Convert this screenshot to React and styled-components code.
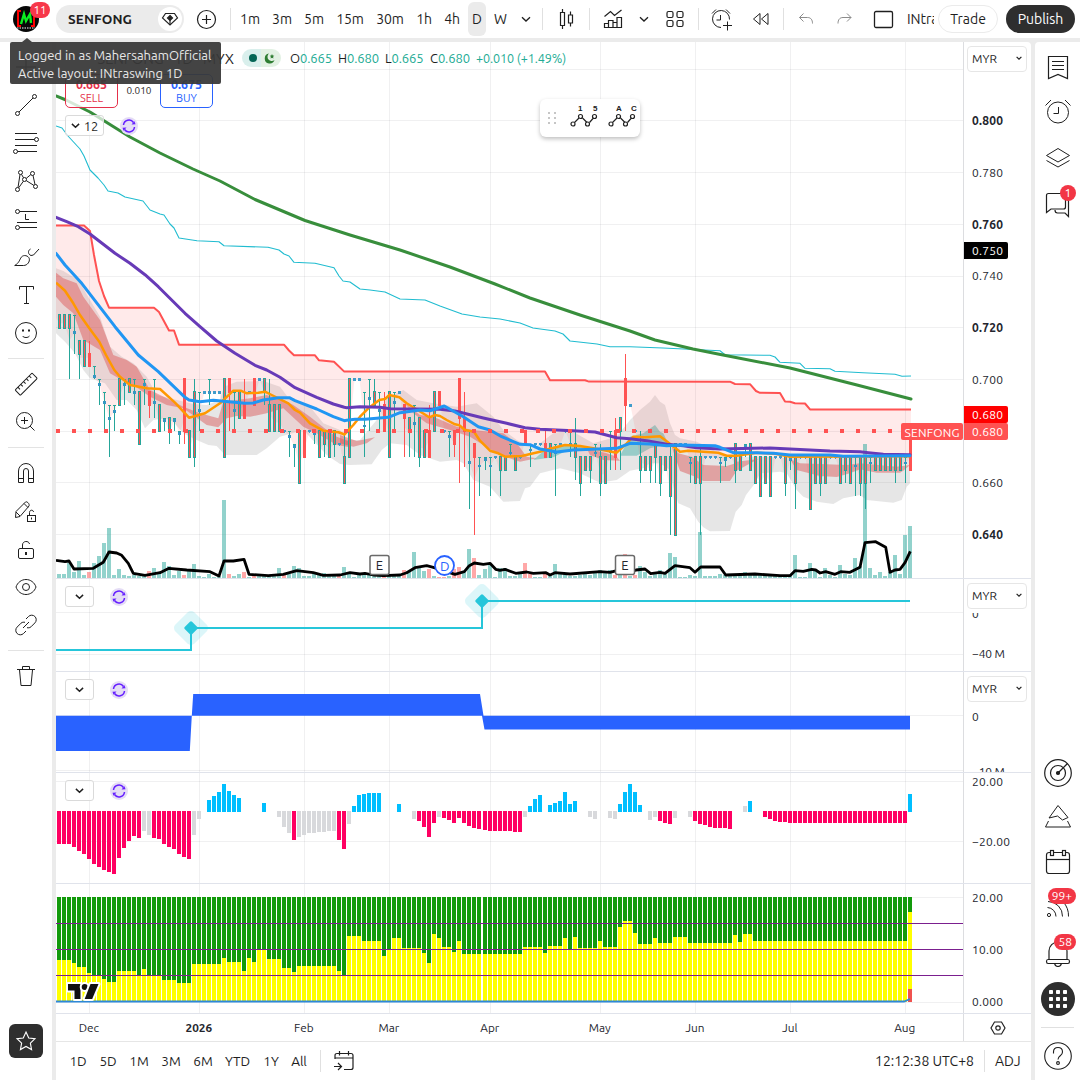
import { Fragment } from 'react';
import styled, { createGlobalStyle } from 'styled-components';

const FONT = `Ubuntu, 'Noto Sans', 'Open Sans', sans-serif`;

const MONTHS = [
  { x: 89, label: 'Dec' },
  { x: 199, label: '2026', bold: true },
  { x: 304, label: 'Feb' },
  { x: 389, label: 'Mar' },
  { x: 490, label: 'Apr' },
  { x: 600, label: 'May' },
  { x: 695, label: 'Jun' },
  { x: 790, label: 'Jul' },
  { x: 905, label: 'Aug' },
];

const priceY = (p) => 120.7 + (800 - p) * 2.587;
const barX = (i) => 57 + 5 * i + (i >= 85 ? 1 : 0);

// series are stored in thirds of a pixel, relative to the start of a segment
const seg = (x0, y0, text) =>
  text
    .trim()
    .split(' ')
    .map((pair) => {
      const [x, y] = pair.split(',').map(Number);
      return `${(x0 + x / 3).toFixed(1)},${(y0 + y / 3).toFixed(1)}`;
    })
    .join(' ');
const A = (t) => seg(50, 200, t);
const V = (t) => seg(50, 480, t);
const B = (t) => seg(340, 340, t);
const C = (t) => seg(630, 340, t);

const GREEN =
  '56,96 66,100 90,112 130,137 160,153 193,169 220,181 255,199.5 280,210 305,220.500 350,235 400,250 450,267 495,284 530,298 580,315 630,331 655,340 693,349 723,355 790,368 857,385 911,399';
const CYAN =
  '56,126 62,128 68,136 80,149 84,156 90,170 98,178 104,185 108,191 118,193 125,197 143,201 150,210 160,214 164,215 170,224 174,228 179,238 197,240.7 219,241.7 224,245.7 268,247.3 279,250 284,254 289,256 294,262.3 315,263.3 334,267.7 339,276 343,281 350,282 360,289 370,290 385,292 400,299 425,300 440,306 462,314 480,317 500,319 520,323 533,328 555,331 563,334 570,341 597,344 610,346.7 630,346.7 663,348 720,350.7 725,354.7 770,355.3 775,357 780,362.3 800,363.3 805,368.3 830,368.7 835,371.3 863,372.7 895,374.3 902,376.3 911,376';
const RED =
  '56,225.5 84,225.5 90,231 94,255 99,281 104,296 109,307.7 154,307.7 159,312 169,330.5 174,330.5 179,344.7 284,344.7 289,350.5 294,355.2 315,355.3 319,360.3 334,361.7 344,371.4 545,371.4 550,380.2 585,380.3 589,381.6 730,381.7 735,384 750,384.2 756,391 760,392.8 780,393 785,401.5 790,401.7 795,403.3 805,403.5 810,409.4 911,409.4';

const PURPLE = [
  A('18,52 50,65 85,80 120,102 195,160 240,190 285,224 325,260 405,340 450,380 500,423 555,460 615,496 650,510 690,532 735,563 800,592 850,612 883,622'),
  B('20,203 60,200 120,202 150,206 300,208 345,213 430,234 500,250 555,263 600,268 700,272 765,276 830,293'),
  C('0,296 50,302 110,313 160,317 200,323 270,327 420,324 600,333 690,335 715,338 760,343 840,344'),
].join(' ');
const BLUE = [
  A('18,160 45,195 95,250 195,380 265,465 325,515 405,592 417,600 450,605 490,601 585,610 610,609 640,600 685,593 718,593 735,602 800,627 850,650 883,662'),
  B('20,241 45,238 75,238 145,232 180,218 240,210 270,212 313,198 370,230 415,260 450,270 485,290 540,313 570,314 600,327 650,336 700,330 830,325'),
  C('0,310 60,312 110,317 150,315 255,317 270,322 310,338 380,338 430,340 480,345 600,345 640,349 840,347'),
].join(' ');
const ORANGE = [
  A('18,248 45,272 70,310 90,345 118,385 148,425 168,465 193,510 210,530 240,555 290,565 330,567 375,608 417,653 465,640 510,610 550,572 572,572 590,580 625,578 645,575 665,585 715,610 735,630 750,638 780,670 820,692 865,697 883,703'),
  B('13,284 40,255 60,230 85,205 118,180 135,177 148,165 178,172 200,190 268,232 285,225 300,228 320,240 345,253 358,256 375,270 402,275 420,302 450,332 475,340 495,350 545,348 600,335 635,325 675,315 720,318 760,325 800,332 830,338 860,310'),
  C('10,290 45,292 90,289 105,300 150,335 175,332 265,338 290,347 320,347 380,338 440,342 480,350 840,349'),
].join(' ');
const VOLUME_MA = [
  V('18,241 45,245 57,243 72,267 130,265 160,247 177,216 200,219 215,226 235,250 250,280 285,286 330,278 357,265 410,270 480,275 507,288 522,243 550,243 582,238 597,283 655,287 700,283 740,272 790,278 820,286 870,285'),
  B('0,705 30,698 60,702 75,700 100,705 130,707 180,705 200,698 225,683 260,677 280,682 345,703 373,695 388,677 403,669 430,673 450,670 467,688 480,691 495,688 527,700 560,696 580,700 618,698 630,705 645,698 690,702 780,695 810,697 830,692 865,700'),
  C('18,690 45,687 62,701 90,697 105,700 135,677 180,683 195,697 212,681 270,681 287,705 375,702 450,707 480,707 495,692 520,694 545,688 557,690 570,699 587,695 615,703 632,695 660,697 690,682 705,608 737,605 767,622 780,697 795,690 810,688 825,668 841,634'),
].join(' ');

const GREY_BAND = [
  A('18,205 40,213 85,240 120,300 150,350 180,440 215,470 250,490 290,530 320,585 380,600 430,612 470,615 510,600 522,560 560,545 640,543 690,560 720,600 780,620 820,670 870,690'),
  B('20,300 60,300 110,240 140,175 190,150 230,180 280,190 350,200 410,190 460,230 490,270 530,300 580,325 640,280 690,270 760,310 830,290'),
  C('0,240 30,210 60,185 75,165 90,185 105,195 120,250 135,285 150,295 200,305 250,330 290,350 400,350 480,355 600,350 840,350'),
  C('840,430 830,440 815,480 790,488 710,480 690,465 640,475 610,492 560,485 520,470 500,450 470,400 450,395 390,400 375,430 348,465 335,495 317,515 300,573 240,574 220,562 205,545 180,505 145,490 130,440 120,390 90,370 60,370 40,385 0,392'),
  B('830,420 780,428 720,400 660,385 600,400 570,440 555,445 540,483 490,485 450,440 400,420 370,370 350,360 300,365 240,345 200,315 150,310 125,330 95,373 30,375 0,372'),
  A('860,785 830,765 760,690 690,710 650,745 620,765 525,765 500,738 475,735 440,720 400,700 370,665 345,655 310,660 285,685 260,630 230,600 200,600 165,550 120,535 100,510 75,460 45,425 18,400'),
].join(' ');

const RED_ZONES = [
  A('18,218 40,235 80,250 100,290 150,360 190,465 230,480 260,500 300,570 350,595 400,620 450,640 505,655 520,605 600,595 650,585 700,600 730,615 780,650 830,690 860,710 900,725 900,742 860,735 800,700 760,680 700,625 650,640 600,650 560,648 530,655 505,682 470,675 400,625 350,615 300,590 250,555 215,540 180,520 150,450 100,420 70,340 40,315 18,290'),
  B('0,285 50,303 105,292 80,310 40,320 0,310'),
  B('190,185 240,225 280,230 350,260 400,270 490,280 530,310 560,350 590,355 540,365 480,345 430,315 390,290 330,270 260,250 220,220'),
  B('740,325 800,340 830,350 840,362 790,360 750,345'),
  C('125,320 145,340 185,350 220,375 290,378 310,372 320,365 385,357 320,392 300,423 220,423 190,408 150,393'),
  C('480,358 510,370 570,372 650,375 690,370 800,380 840,375 820,392 810,398 740,398 690,388 660,400 620,411 570,408 500,390'),
];
const TEAL_ZONES = [
  B('580,360 620,325 680,312 740,320 740,328 680,332 640,352'),
  C('-30,347 0,290 40,280 75,255 90,275 100,280 115,312 60,325 20,347'),
];

// m: bar with a body (high low top bottom), r: falling bar, w: thin bar (high low avg), d: single trade
const CANDLES = `m 725 720 725 720|m 725 720 725 720|m 725 700 725 720|w 725 710 718|m 715 700 715 710|m 715 705 715 705|r 715 705 710 705|w 705 700 701|w 700 690 698|w 695 680 691
w 690 670 685|w 690 680 687.5|m 700 690 700 690|w 700 690 698|m 700 695 700 695|w 700 690 695|m 695 675 695 675|w 700 690 698|r 695 685 695 690|w 700 685 691
m 690 680 690 680|w 685 680 684|m 685 675 685 680|w 685 680 684|w 680 675 679|r 700 675 700 680|m 680 670 680 670|m 700 666 695 670|w 695 680 688|d 695
w 700 690 695|d 695|d 695|m 700 670 700 670|r 700 680 700 695|w 695 680 688|m 695 685 695 685|r 700 685 690 685|d 695|r 700 690 700 690
d 700|m 700 690 700 695|m 700 680 690 680|m 690 680 690 680|m 690 680 690 680|d 680|w 680 670 678|w 675 666 674|m 680 660 680 660|r 680 670 680 670
d 680|w 680 675 679|m 680 670 680 670|m 680 670 680 675|m 680 670 680 670|m 680 670 680 675|d 675|m 680 660 670 660|m 700 670 700 670|d 700
d 700|w 695 670 682|w 700 680 692.5|m 700 690 695 690|w 695 680 688|r 695 680 690 680|m 695 670 695 670|w 695 680 691|d 695|r 690 670 690 685
m 685 670 685 680|w 690 670 683|m 685 666 685 670|m 680 670 680 670|r 690 670 680 670|m 695 680 695 680|r 695 690 695 690|d 680|w 680 670 678|r 680 670 680 675
r 700 660 700 685|r 695 666 685 680|w 680 650 668|r 675 640 675 670|w 670 655 666.5|w 670 665 669|w 670 655 666.5|d 670|m 670 655 670 665|m 670 665 670 665
w 675 670 671.5|m 670 665 670 665|d 670|r 680 675 680 675|w 675 666 672.7|d 675|d 675|r 680 670 675 670|m 675 670 675 670|w 675 655 671.5
d 675|d 680|w 680 670 675|m 685 661 675 670|m 670 655 670 660|m 670 665 670 665|m 670 660 670 665|w 675 670 671.5|m 675 655 670 660|m 670 660 670 660
w 680 665 672|r 685 665 680 670|m 685 665 685 680|r 710 680 700 690|d 690|d 680|m 680 660 670 665|m 670 665 670 665|m 670 660 670 665|m 675 660 675 670
m 670 655 670 660|m 670 665 670 665|m 675 640 670 655|m 675 640 675 640|d 675|d 675|w 670 660 667.7|m 670 660 670 660|m 675 640 670 660|d 670
d 670|d 670|w 670 660 667.7|w 670 666 669|d 670|m 675 660 675 665|m 670 665 670 665|w 675 670 674|m 675 665 675 665|m 670 660 670 660
m 670 655 670 655|m 670 660 670 660|m 670 655 670 655|d 670|d 670|m 670 655 670 660|w 670 665 669|m 670 650 670 660|d 670|d 670
m 670 650 670 650|m 670 660 670 660|m 670 655 670 660|m 670 660 670 660|d 670|d 670|m 670 660 670 660|m 670 660 670 665|m 670 660 670 660|w 670 655 666.5
m 670 655 670 660|m 670 650 670 660|w 670 660 667.7|m 670 665 670 665|m 670 665 670 665|m 670 665 670 665|m 670 665 670 665|m 670 660 670 665|m 670 665 670 665|w 670 660 667.7
r 680 665 680 665`
  .split(/[|\n]/)
  .map((row) => {
    const [kind, ...v] = row.split(' ');
    const n = v.map(Number);
    const avg = kind === 'd' ? n[0] : kind === 'w' ? n[2] : (n[0] + n[1] + n[3]) / 3;
    return { kind, n, avg };
  });

const VOLUME =
  '4 4 15 6 17 3 r6 15 22 35 50 3 9 3 2 3 2 3 r7 10 5 16 12 3 7 r3 7 14 2 1 4 1 2 78 r4 2 4 r6 1 r3 2 3 2 2 10 r3 4 12 10 2 2 6 4 5 2 2 r2 11 4 1 3 5 5 3 4 r3 3 3 3 r8 6 26 10 7 r9 2 r1 r1 2 r9 r11 7 29 r20 3 9 13 1 10 10 2 2 4 r15 r4 1 1 r5 3 14 5 5 2 2 3 5 3 6 8 7 8 r3 5 r24 2 r3 12 6 2 4 8 4 25 21 1 1 3 2 46 2 2 2 4 3 2 4 4 6 4 5 3 3 2 2 2 1 2 23 1 1 15 8 1 10 3 1 13 4 3 20 12 134 10 3 6 2 6 23 4 43 52'.split(' ');

// p: pink down, g: grey down, b: blue up, G: grey up
const MOMENTUM =
  'p33 p33 p33 p36 p40 p43 p48 p53 p56 p59 p61 p63 p47 p37 p30 p25 p27 g20 g24 p27 p28 p33 p36 p38 p43 p46 p48 g24 g8 - b12 b16 b20 b28 b21 b17 b14 - - - - b9 - - g6 g16 g22 p29 g26 g24 g22 g22 g21 g21 g20 g20 p29 p38 g13 b6 b17 b18 b19 b19 b19 - - - b8 - - g8 p10 p16 p26 p12 g6 p7 p9 p12 p7 p12 p15 p17 p18 p19 p20 p20 p20 p20 p20 p21 p21 g6 b6 b13 b17 - b7 b9 b11 b20 b8 b11 - - g6 g8 - - g7 g8 b8 b20 b28 b20 b7 - g9 g6 p10 p12 p13 g7 - - g6 p10 p13 p14 p16 p17 p17 p17 p18 - - G6 b11 - - p6 p8 p10 p11 p11'
    .split(' ')
    .concat(Array(24).fill('p12'), 'b18');
const MOMENTUM_COLOR = { p: '#ff0062', g: '#d8d9dc', b: '#00bfff', G: '#d8d9dc' };

// run lengths of the stacked histogram: [bars, height of the green part]
const STACK = [
  [3, 63], [1, 66], [2, 70], [1, 76], [2, 78.7], [1, 82], [2, 85], [4, 74], [1, 78.3], [1, 72], [3, 78.7], [3, 83],
  [3, 86], [6, 67], [1, 61], [3, 65], [1, 74], [1, 61], [1, 65], [2, 53], [3, 62], [2, 71], [1, 75], [8, 69], [1, 74],
  [1, 78.3], [3, 39], [4, 44], [1, 59], [1, 53], [2, 41], [4, 51], [1, 56], [1, 66], [1, 37], [1, 41], [2, 50],
  [1, 55], [1, 44], [12, 57], [4, 50], [1, 56], [3, 49], [1, 41], [1, 53], [1, 40], [4, 51], [1, 44], [3, 50],
  [1, 30], [2, 24], [1, 36], [3, 47], [1, 41], [3, 46], [3, 40], [9, 46], [1, 38], [1, 45], [2, 37], [31, 44], [1, 15],
].flatMap(([count, h]) => Array(count).fill(h));

function Icon({ size = 28, width = 1, children, ...rest }) {
  return (
    <svg width={size} height={size} viewBox='0 0 28 28' fill='none' stroke='currentColor' strokeWidth={width} {...rest}>
      {children}
    </svg>
  );
}

function Chevron({ size = 10, width = 1.3 }) {
  return (
    <svg width={size} height={size} viewBox='0 0 10 10' fill='none' stroke='currentColor' strokeWidth={width}>
      <path d='M1 3.2 5 7l4-3.8' />
    </svg>
  );
}

const drawTools = [
  [
    <Icon><path d='M14 4v20M4 14h20' /></Icon>,
    <Icon><path d='m7 21 14-14' /><circle cx='5.5' cy='22.5' r='2' /><circle cx='22.5' cy='5.5' r='2' /></Icon>,
    <Icon>
      <path d='M3 4.5h22M3 10.5h19.5M3 16.5h22M5.5 22.5H25' />
      <circle cx='24.5' cy='10.5' r='2' /><circle cx='3.5' cy='22.5' r='2' />
    </Icon>,
    <Icon>
      <path d='M8 7.5 6 20.5M6.7 20.8l4.7-6.6M9.5 7.3l2 3.5M14.2 11.4l4.6-3.8M21 8.5l2 9M14.2 13.6l7.7 4.8' />
      <circle cx='8.5' cy='5.5' r='2' /><circle cx='20.5' cy='6.5' r='2' /><circle cx='12.5' cy='12.5' r='2' />
      <circle cx='5.5' cy='22.5' r='2' /><circle cx='23.5' cy='19.5' r='2' />
    </Icon>,
    <Icon>
      <path d='M7.5 6.5H25M5 17.5h20M7.5 22.5H25M13.5 9v5.5H17' />
      <circle cx='5.5' cy='6.5' r='2' /><circle cx='5.5' cy='22.5' r='2' />
    </Icon>,
    <Icon>
      <path d='M2.700 22.500h8.800c4 0 6.500-4 5.800-6.800-.7-3-5.600-4.500-8-1.500-1.800 2.400-1.800 5.500-6.600 8.300ZM18.500 6c-3 1.500-2.500 5.500.500 6.500l2.500-.500 5.500-6' />
    </Icon>,
    <Icon><path d='M7.500 8.500v-3h14v3M14.500 5.500v17M12 22.500h5' /></Icon>,
    <Icon>
      <circle cx='14' cy='14' r='10.5' /><path d='M10.500 17c1.500 2 5.500 2 7 0' />
      <path d='M10 11.500h2M16 11.500h2' strokeWidth='1.800' />
    </Icon>,
  ],
  [
    <Icon>
      <g transform='rotate(-45 14 14)'>
        <rect x='2' y='10.500' width='24' height='7.500' rx='1' />
        <path d='M6 10.500v3M10 10.500v3M14 10.500v3M18 10.500v3M22 10.500v3' />
      </g>
    </Icon>,
    <Icon><circle cx='12.500' cy='12.500' r='8' /><path d='m18 18 4.500 4.500M9 12.500h7M12.500 9v7' /></Icon>,
  ],
  [
    <Icon>
      <path d='M6.500 23.500V12a7.500 7.500 0 0 1 15 0v11.500h-5V12a2.500 2.500 0 0 0-5 0v11.500ZM6.500 19.500h5M16.500 19.500h5' />
    </Icon>,
    <Icon>
      <path d='m3.500 20.500.5-6L13.500 5c1-1 4.500 1.500 3.500 4l-9 10.500-4.500 1ZM4 15l4 4M12 6.500l4 4' />
      <rect x='15.500' y='18.500' width='8' height='6' /><path d='M17.500 18.500v-3c0-3 4-3 4-.5M19.500 20.500v2' />
    </Icon>,
    <Icon>
      <rect x='6.500' y='13.500' width='15' height='10' rx='1.500' />
      <path d='M10.500 13.500V10c0-4.500 6.500-4.500 7-1' /><path d='M14 17v3' strokeWidth='2' />
    </Icon>,
    <Icon>
      <path d='M4 14c1.500-4.500 5.500-7.500 10-7.500S22.500 9.500 24 14c-1.500 4.500-5.500 7.500-10 7.500S5.500 18.500 4 14Z' />
      <circle cx='14' cy='14' r='3.500' />
    </Icon>,
    <Icon>
      <path d='m14 8 2.500-2.500a4.500 4.500 0 0 1 6.400 6.400L19 15.800c-1 1-2.500 1.200-4 .9M14 20l-2.500 2.500a4.500 4.500 0 0 1-6.400-6.400L9 12.200c1-1 2.500-1.200 4-.9M11 17l6-6' />
    </Icon>,
  ],
  [<Icon><path d='M5 7.500h18M10.500 7V4.500h7V7M7.500 8l1.500 15.500h10L20.500 8' /></Icon>],
];

const timeframes = [
  ['1m', 36], ['3m', 28], ['5m', 36], ['15m', 36], ['30m', 44], ['1h', 24], ['4h', 32], ['D', 18], ['W', 29],
];

const ranges = [['1D', 30], ['5D', 30], ['1M', 32], ['3M', 32], ['6M', 32], ['YTD', 37], ['1Y', 30], ['All', 26]];

function AlarmIcon({ plus }) {
  return (
    <Icon>
      {plus ? (
        <path d='M21.500 14.500a8.500 8.500 0 1 0-8.500 8M12.500 10v5h-4M4 8.500l4-4M22 8.500l-4-4M19.500 16.500v9M15 20.500h9' />
      ) : (
        <>
          <circle cx='14' cy='14.500' r='10.500' />
          <path d='M14.500 9v6.500h-5M1.500 7.500l5.500-5.500M26.500 7.500 21 2' />
        </>
      )}
    </Icon>
  );
}

function Header() {
  return (
    <TopBar>
      <Cell $w={56}>
        <Avatar>
          <svg width='26' height='26' viewBox='0 0 26 26'>
            <path d='M8 5H5v15h3M18 5h3v15h-3' fill='none' stroke='#f00' strokeWidth='2' />
            <path d='m8 18 3-10 2 7 4-7 1 9' fill='none' stroke='#0bef20' strokeWidth='2.400' />
            <path d='M4 22h18' stroke='#aaa' strokeWidth='1.500' strokeDasharray='1.500 1' />
          </svg>
        </Avatar>
        <AvatarBadge>11</AvatarBadge>
      </Cell>
      <SymbolSearch>
        SENFONG
        <Gem>
          <svg width='18' height='18' viewBox='0 0 18 18' fill='none' stroke='#222' strokeWidth='1.200'>
            <path d='M4.500 3.500h9L16.500 8 9 15 1.500 8Z' />
            <path d='m9 5.500 2.500 2.500L9 10.500 6.500 8Z' fill='#222' /><path d='M9 10v5' />
          </svg>
        </Gem>
      </SymbolSearch>
      <Cell $w={44}>
        <Icon width={1.200}><circle cx='14.500' cy='14.500' r='9' /><path d='M14.500 10v9M10 14.500h9' /></Icon>
      </Cell>
      <Cell $w={4}><Divider /></Cell>
      {timeframes.map(([label, w]) => (
        <Timeframe key={label} $w={w} $active={label === 'D'}>{label}</Timeframe>
      ))}
      <Cell $w={21}><Chevron /></Cell>
      <Cell $w={12}><Divider /></Cell>
      <Cell $w={36}>
        <Icon width={1.200}>
          <path d='M10.500 4v3.500M10.500 20.500V24M8.500 7.500h4v13h-4ZM18.500 6.500V10M18.500 18v3.500M16.500 10h4v8h-4Z' />
        </Icon>
      </Cell>
      <Cell $w={11}><Divider /></Cell>
      <Cell $w={36}>
        <Icon width={1.200}>
          <path d='M5.500 22.500v-4h4v4ZM9.500 22.500v-7h4.500v7ZM14 22.500v-5h4v5ZM18 22.500v-10h4.500v10ZM5.500 11.500l6-5 4 4 7-5.500' />
        </Icon>
      </Cell>
      <Cell $w={26}><Chevron /></Cell>
      <Cell $w={36}>
        <Icon width={1.200}>
          <rect x='6' y='6.500' width='6' height='6' rx='1.500' /><rect x='16' y='6.500' width='6' height='6' rx='1.500' />
          <rect x='6' y='15.500' width='6' height='6' rx='1.500' /><rect x='16' y='15.500' width='6' height='6' rx='1.500' />
        </Icon>
      </Cell>
      <Cell $w={11}><Divider /></Cell>
      <Cell $w={36}><AlarmIcon plus /></Cell>
      <Cell $w={42}><Icon><path d='M13 8.500v11l-6.500-5.500ZM21 8.500v11L14.500 14Z' /></Icon></Cell>
      <Cell $w={3}><Divider /></Cell>
      <Cell $w={42} $color='#8c8c8c'><Icon><path d='m11.500 8.500-4 4 4 4M7.500 12.500h8c3.500 0 5 2.500 5 6' /></Icon></Cell>
      <Cell $w={34} $color='#8c8c8c'><Icon><path d='m17 8.500 4 4-4 4M21 12.500h-8c-3.500 0-5 2.500-5 6' /></Icon></Cell>
      <Cell $w={45}><Icon width={1.300}><rect x='4.500' y='6.500' width='18' height='16' rx='1.500' /></Icon></Cell>
      <LayoutName>INtraswing 1D</LayoutName>
      <TradeButton>Trade</TradeButton>
      <PublishButton>Publish</PublishButton>
    </TopBar>
  );
}

function GridLines({ rows, top, bottom }) {
  return (
    <g stroke='#2a2e39' strokeOpacity='0.07' shapeRendering='crispEdges'>
      {MONTHS.map(({ x }) => <path key={x} d={`M${x + 0.5} ${top}V${bottom}`} />)}
      {rows.map((y) => <path key={y} d={`M56 ${y + 0.5}H963`} />)}
    </g>
  );
}

function Candle({ i, kind, n, avg }) {
  const x = barX(i) + 1;
  const c = kind === 'r' ? '#ff5252' : '#26a69a';
  if (kind === 'd') return <rect x={x} y={priceY(n[0]) - 1.5} width='3' height='3' rx='1' fill='#3f9bcb' />;
  const hi = Math.round(priceY(n[0]));
  const lo = Math.round(priceY(n[1]));
  if (kind === 'w') {
    return (
      <>
        <rect x={x + 1} y={hi} width='1' height={lo - hi} fill={c} />
        <rect x={x} y={hi} width='3' height='1' fill={c} />
        <rect x={x} y={priceY(avg) - 1.5} width='3' height='3' rx='1' fill='#3596c4' />
      </>
    );
  }
  const top = Math.round(priceY(n[2])) - 1;
  const bottom = Math.round(priceY(n[3])) + 1;
  return (
    <>
      <rect x={x + 1} y={hi} width='1' height={lo - hi} fill={c} />
      <rect x={x} y={top} width='3' height={bottom - top} fill={c} />
      {kind === 'm' && <rect x={x + 1} y={top + 1} width='1' height={bottom - top - 2} fill='#ff5252' />}
    </>
  );
}

function EventMark({ x, label }) {
  return (
    <g>
      <rect x={x - 9.5} y='555.500' width='19' height='19' rx='2' fill='#fff' stroke='#6a6a6a' strokeWidth='1.500' />
      <AxisText x={x} y='569.500' $size={13} textAnchor='middle'>{label}</AxisText>
    </g>
  );
}

function PriceChart() {
  const below = CANDLES.map((c, i) => `${barX(i) + 2.5},${priceY(c.avg).toFixed(1)}`).reverse().join(' ');
  return (
    <svg width='907' height='536' viewBox='56 42 907 536'>
      <GridLines top={42} bottom={578} rows={[69, 120, 172, 224, 276, 327, 379, 431, 482, 534]} />
      <polygon points={GREY_BAND} fill='#787878' fillOpacity='0.19' />
      {RED_ZONES.map((p) => <polygon key={p} points={p} fill='#d84545' fillOpacity='0.42' />)}
      {TEAL_ZONES.map((p) => <polygon key={p} points={p} fill='#26a69a' fillOpacity='0.4' />)}
      <polygon points={`${RED} ${below} 56,318`} fill='#ff5252' fillOpacity='0.12' />
      <g fillOpacity='0.5' shapeRendering='crispEdges'>
        {VOLUME.map((v, i) => {
          const h = Number(v.replace('r', ''));
          return <rect key={i} x={barX(i)} y={578 - h} width='4' height={h} fill={v[0] === 'r' ? '#ff5252' : '#26a69a'} />;
        })}
      </g>
      <g shapeRendering='crispEdges'>
        {CANDLES.map((c, i) => <Candle key={i} i={i} {...c} />)}
      </g>
      <g fill='none' strokeLinejoin='round'>
        <polyline points={CYAN} stroke='#20bcd0' strokeWidth='1.100' />
        <polyline points={RED} stroke='#ff5252' strokeWidth='2' />
        <polyline points={GREEN} stroke='#388e3c' strokeWidth='3' strokeLinecap='round' />
        <polyline points={ORANGE} stroke='#ff9800' strokeWidth='2.500' />
        <polyline points={PURPLE} stroke='#673ab7' strokeWidth='3' strokeLinecap='round' />
        <polyline points={BLUE} stroke='#2196f3' strokeWidth='3' strokeLinecap='round' />
      </g>
      <path d='M58 431H901' transform='translate(-2 0)' stroke='#ff5252' strokeWidth='4' strokeDasharray='4 12' />
      <polyline points={VOLUME_MA} fill='none' stroke='#000' strokeWidth='2.800' strokeLinejoin='round' />
      <EventMark x={379.5} label='E' />
      <EventMark x={625} label='E' />
      <circle cx='444.500' cy='565.500' r='9.500' fill='#fff' stroke='#2962ff' strokeWidth='1.800' />
      <AxisText x='444.800' y='570.500' $size={13.5} $fill='#2962ff' textAnchor='middle'>D</AxisText>
      <rect x='901' y='423' width='62' height='17' rx='2' fill='#ff5252' />
      <AxisText x='904.500' y='436.500' $size={12} $fill='#fff' textLength='55'>SENFONG</AxisText>
    </svg>
  );
}

function PriceScale() {
  const rows = [[120.5, '0.800'], [172.5, '0.780'], [224.5, '0.760'], [275.5, '0.740'], [327.5, '0.720'], [379.5, '0.700'], [482.5, '0.660'], [534.5, '0.640']];
  const bold = ['0.800', '0.760', '0.720', '0.640'];
  const tags = [[242, '0.750', '#000'], [406, '0.680', '#ff0000'], [423, '0.680', '#ff5252']];
  return (
    <svg width='67' height='536' viewBox='964 42 67 536'>
      {rows.map(([y, t]) => <AxisText key={t} x='972' y={y + 4.5} textLength='31' $bold={bold.includes(t)}>{t}</AxisText>)}
      {tags.map(([y, t, fill]) => (
        <Fragment key={y}>
          <path d={`M964 ${y}h42q2 0 2 2v13q0 2-2 2h-42Z`} fill={fill} />
          <AxisText x='972' y={y + 13.200} textLength='31' $fill='#fff'>{t}</AxisText>
        </Fragment>
      ))}
    </svg>
  );
}

function Scale({ top, height, rows }) {
  return (
    <svg width='67' height={height} viewBox={`964 ${top} 67 ${height}`}>
      {rows.map(([y, t, w]) => <AxisText key={t} x='972' y={y + 4.5} textLength={w}>{t}</AxisText>)}
    </svg>
  );
}

function Diamond({ x, y }) {
  return (
    <g fill='#26c6da' transform={`translate(${x} ${y}) rotate(45)`}>
      <rect x='-13.500' y='-13.500' width='27' height='27' rx='5' fillOpacity='0.16' />
      <rect x='-5.200' y='-5.200' width='10.400' height='10.400' rx='1.500' />
    </g>
  );
}

function IncomeChart() {
  return (
    <svg width='907' height='92' viewBox='56 579 907 92'>
      <GridLines top={579} bottom={671} rows={[612, 654]} />
      <path d='M56 650H191V628H482V601H910' fill='none' stroke='#26c6da' strokeWidth='2' />
      <Diamond x={191} y={628} />
      <Diamond x={482} y={601} />
    </svg>
  );
}

function CashFlowChart() {
  return (
    <svg width='907' height='100' viewBox='56 672 907 100'>
      <GridLines top={672} bottom={772} rows={[715, 770]} />
      <path d='M56 715.700H191.800L193.200 694H480L483.500 715.700H910V729.500H484.500L482 715.700H191.800L189.800 751H56Z' fill='#2962ff' />
    </svg>
  );
}

function MomentumChart() {
  return (
    <svg width='907' height='110' viewBox='56 773 907 110'>
      <GridLines top={773} bottom={883} rows={[781, 841]} />
      <g shapeRendering='crispEdges'>
        {MOMENTUM.map((m, i) => {
          if (m === '-') return null;
          const h = Number(m.slice(1));
          const up = m[0] === 'b' || m[0] === 'G';
          return <rect key={i} x={barX(i)} y={up ? 812 - h : 811} width='4' height={h} fill={MOMENTUM_COLOR[m[0]]} />;
        })}
      </g>
    </svg>
  );
}

function StackChart() {
  return (
    <svg width='907' height='129' viewBox='56 884 907 129'>
      <GridLines top={884} bottom={1013} rows={[897, 949, 1002]} />
      <g shapeRendering='crispEdges'>
        {STACK.map((h, i) => (
          <Fragment key={i}>
            <rect x={barX(i)} y='897' width='4' height={h} fill='#129a0b' />
            <rect x={barX(i)} y={897 + h} width='4' height={105 - h} fill='#ffff00' />
          </Fragment>
        ))}
        <rect x='908' y='989' width='4' height='13' fill='#f0524f' />
        <path d='M56 923.500H963M56 949.500H963M56 975.500H963' stroke='#7b1f8f' />
      </g>
      <path d='M56 1001.500H904L910 999' fill='none' stroke='#2d88d8' strokeWidth='1.800' />
      <g stroke='#fff' strokeWidth='4' strokeLinejoin='round' fill='#111' style={{ paintOrder: 'stroke' }}>
        <path d='M68 984h12.500v15h-6v-8.500H68Z' />
        <circle cx='84.700' cy='987' r='3' />
        <path d='M90.500 984h8l-6.300 15h-7.500Z' />
      </g>
    </svg>
  );
}

function SyncIcon() {
  return (
    <Sync>
      <svg width='14' height='14' viewBox='0 0 14 14' fill='none' stroke='#651fff' strokeWidth='1.500'>
        <path d='M1.500 6a5.500 5.500 0 0 1 10-2.500M12.500 8a5.500 5.500 0 0 1-10 2.500' />
        <path d='m9.500 5.500 4-.3-1-3ZM4.500 8.500l-4 .3 1 3Z' fill='#651fff' stroke='none' />
      </svg>
    </Sync>
  );
}

function PaneLegend({ count, top }) {
  return (
    <LegendRow $top={top}>
      <Collapse $wide={Boolean(count)}><Chevron size={9} width={1.600} />{count}</Collapse>
      <SyncIcon />
    </LegendRow>
  );
}

function Currency() {
  return <CurrencyBox>MYR<Chevron size={6} width={2} /></CurrencyBox>;
}

function WaveIcon({ from, to }) {
  return (
    <svg width='30' height='26' viewBox='0 0 30 26' fill='none' stroke='#222' strokeWidth='1.200'>
      <path d='M4.500 17.500 9 13M12.500 13l4.500 4.500M19.500 17.500l3.500-4' />
      <circle cx='3' cy='19' r='2' /><circle cx='10.500' cy='11.500' r='2' />
      <circle cx='17.500' cy='19' r='2' /><circle cx='24.500' cy='11.500' r='2' />
      <WaveText x='8' y='6'>{from}</WaveText>
      <WaveText x='23' y='6'>{to}</WaveText>
    </svg>
  );
}

function Chart() {
  const ohlc = [['O', '0.665'], ['H', '0.680'], ['L', '0.665'], ['C', '0.680']];
  return (
    <ChartArea>
      <Pane $h={536}>
        <PriceChart />
        <Axis><PriceScale /><Currency /></Axis>
        <Legend>
          <TitleRow>
            <SymbolTitle>SENFONG · 1D · MYX</SymbolTitle>
            <Status>
              <Dot />
              <svg width='13' height='13' viewBox='0 0 13 13'>
                <path d='M6 1.500A5 5 0 1 0 11.500 8 4 4 0 0 1 6 1.500Z' fill='#2e7d32' />
                <path d='m9 2 .7 1.500 1.600.2-1.200 1.100.3 1.700L9 5.700l-1.400.8.300-1.700-1.200-1.100 1.600-.2Z' fill='#2e7d32' />
              </svg>
            </Status>
            {ohlc.map(([k, v]) => <Ohlc key={k}>{k}<b>{v}</b></Ohlc>)}
            <Change>+0.010 (+1.49%)</Change>
          </TitleRow>
          <TradeRow>
            <Quote $color='#e5304a'><b>0.665</b>SELL</Quote>
            <Spread>0.010</Spread>
            <Quote $color='#2962ff'><b>0.675</b>BUY</Quote>
          </TradeRow>
        </Legend>
        <PaneLegend count='12' top={73} />
        <FloatingTools>
          <Grip>{[0, 1, 2, 3, 4, 5].map((k) => <i key={k} />)}</Grip>
          <WaveIcon from='1' to='5' />
          <WaveIcon from='A' to='C' />
        </FloatingTools>
      </Pane>
      <Pane $h={93} $line>
        <IncomeChart />
        <Axis><Scale top={579} height={92} rows={[[613, '0', 6], [653.5, '−40 M', 33]]} /><Currency /></Axis>
        <PaneLegend top={7} />
      </Pane>
      <Pane $h={101} $line>
        <CashFlowChart />
        <Axis><Scale top={672} height={100} rows={[[716.5, '0', 6], [771.5, '−10 M', 33]]} /><Currency /></Axis>
        <PaneLegend top={7} />
      </Pane>
      <Pane $h={111} $line>
        <MomentumChart />
        <Axis><Scale top={773} height={110} rows={[[781.5, '20.00', 31], [841.5, '−20.00', 38]]} /></Axis>
        <PaneLegend top={7} />
      </Pane>
      <Pane $h={130} $line>
        <StackChart />
        <Axis><Scale top={884} height={129} rows={[[897.5, '20.00', 31], [949.5, '10.00', 31], [1001.5, '0.000', 31]]} /></Axis>
      </Pane>
      <Pane $h={28} $line>
        <svg width='907' height='27' viewBox='56 1014 907 27'>
          {MONTHS.map(({ x, label, bold }) => (
            <AxisText key={label} x={x - 0.2} y='1032' $size={11.8} $bold={bold} textAnchor='middle'>{label}</AxisText>
          ))}
        </svg>
        <Axis $center>
          <svg width='16' height='14' viewBox='0 0 16 14' fill='none' stroke='#222' strokeWidth='1.200'>
            <path d='M4.500 1h7L15 7l-3.500 6h-7L1 7Z' /><circle cx='8' cy='7' r='2.200' />
          </svg>
        </Axis>
      </Pane>
      <RangeBar>
        {ranges.map(([label, w]) => <Range key={label} $w={w}>{label}</Range>)}
        <Cell $w={14}><Divider /></Cell>
        <Cell $w={34}>
          <Icon width={1.200}>
            <path d='M5 12V8.500c0-1.500 1-2 2-2h14c1 0 2 .5 2 2v12c0 1.500-1 2-2 2h-7M5 11h18M9.500 4v4.500M18.500 4v4.500M4 19.500h7M8 16l3.500 3.500L8 23' />
          </Icon>
        </Cell>
        <Clock>12:12:38 UTC+8</Clock>
        <Cell $w={21}><Divider /></Cell>
        <Adjust>ADJ</Adjust>
      </RangeBar>
    </ChartArea>
  );
}

function RightBar() {
  return (
    <RightPanel>
      <SideItem $h={45}><Icon width={1.200}><path d='M4.500 3.500h19v22L14 21.500 4.500 25.500ZM8 8.500h12M8 12.500h12M8 16.500h12' /></Icon></SideItem>
      <SideItem $h={45}><AlarmIcon /></SideItem>
      <SideItem $h={47}><Icon><path d='m14 4.500 11.500 7L14 18 2.500 11.500ZM2.500 16.500 14 23l11.500-6.500' /></Icon></SideItem>
      <SideItem $h={45}>
        <Icon width={1.200}>
          <path d='M2.500 22.500V5.500c0-1 .5-2 2-2h15c1.500 0 2 1 2 2V17c0 1-.5 2-2 2H7ZM24.500 10v16.500l-3.500-3.500h-7.500c-1.500 0-2.500-1-2.500-3' />
        </Icon>
        <Badge $right={4} $top={4}>1</Badge>
      </SideItem>
      <Spacer />
      <SideItem $h={44}>
        <Icon width={1.200}><circle cx='14' cy='14' r='13.300' /><circle cx='14' cy='14' r='7.500' /><circle cx='14' cy='14' r='1.500' fill='currentColor' /><path d='m14 14 9.500-9.500' /></Icon>
      </SideItem>
      <SideItem $h={44}>
        <Icon><path d='M14 2.500 24 14.500l-5.500 2.500-5-4-8.500 2ZM4.500 18l-3 6h25l-3-6' /></Icon>
      </SideItem>
      <SideItem $h={45}>
        <Icon width={1.200}><rect x='2.500' y='4.500' width='23' height='21' rx='2.500' /><path d='M2.500 11.500h23' /><rect x='6.500' y='2.500' width='3' height='5' fill='#fff' /><rect x='18.500' y='2.500' width='3' height='5' fill='#fff' /></Icon>
      </SideItem>
      <SideItem $h={48}>
        <Icon><circle cx='5' cy='21' r='1.600' /><path d='M3.500 13.500a9 9 0 0 1 8.500 9M4 7.500a14.500 14.500 0 0 1 14.500 15M5 1.500a20 20 0 0 1 19.500 21' /></Icon>
        <Badge $right={4} $top={4}>99+</Badge>
      </SideItem>
      <SideItem $h={42}>
        <Icon width={1.200}><path d='M5 20.500V12a9 9 0 0 1 18 0v8.500M4 20.500h20c2 0 2 4 0 4H4c-2 0-2-4 0-4ZM10.500 24.500c1 4 6 4 7 0' /></Icon>
        <Badge $right={4} $top={2}>58</Badge>
      </SideItem>
      <SideItem $h={50}>
        <AppsButton>
          <svg width='18' height='18' viewBox='0 0 18 18' fill='#fff'>
            {[0, 7, 14].map((y) => [0, 7, 14].map((x) => <rect key={`${x}-${y}`} x={x} y={y} width='4' height='4' rx='0.800' />))}
          </svg>
        </AppsButton>
      </SideItem>
      <SideLine />
      <SideItem $h={48}>
        <Icon width={1.100}><circle cx='14' cy='14' r='13.300' /><path d='M9.500 11.500V10c0-6 9-6 9 0 0 4-4.500 3.500-4.500 7.500' /><circle cx='14' cy='21' r='1.400' /></Icon>
      </SideItem>
    </RightPanel>
  );
}

export default function App() {
  return (
    <Page>
      <GlobalStyle />
      <Header />
      <Body>
        <LeftPanel>
          {drawTools.map((group, g) => (
            <Fragment key={g}>
              {g > 0 && <ToolLine />}
              {group.map((icon, k) => <Tool key={k}>{icon}</Tool>)}
            </Fragment>
          ))}
          <Spacer />
          <Favorites>
            <Icon size={24} width={1.300}><path d='m14 3.500 3.200 7 7.300.9-5.400 5.100 1.400 7.500-6.500-3.700L7.500 24l1.400-7.500-5.400-5.100 7.300-.9Z' /></Icon>
          </Favorites>
        </LeftPanel>
        <Chart />
        <RightBar />
      </Body>
      <Tooltip>
        <span>Logged in as MahersahamOfficial</span>
        <span>Active layout: INtraswing 1D</span>
      </Tooltip>
    </Page>
  );
}

const GlobalStyle = createGlobalStyle`
  * {
    box-sizing: border-box;
  }
  body {
    margin: 0;
    background: #ebebeb;
    font-family: ${FONT};
    color: #1f1f1f;
  }
  svg {
    display: block;
    flex-shrink: 0;
  }
`;

const Page = styled.div`
  position: relative;
  display: flex;
  flex-direction: column;
  gap: 4px;
  width: 1080px;
  height: 1080px;
  overflow: hidden;
`;
const TopBar = styled.header`
  display: flex;
  align-items: center;
  height: 38px;
  background: #fff;
  font-size: 14px;
`;
const Cell = styled.div`
  position: relative;
  display: flex;
  align-items: center;
  justify-content: center;
  flex-shrink: 0;
  width: ${(p) => p.$w}px;
  height: 100%;
  color: ${(p) => p.$color || '#1f1f1f'};
`;
const Divider = styled.div`
  flex-shrink: 0;
  width: 1px;
  height: 22px;
  background: #e0e0e0;
`;
const Avatar = styled.div`
  width: 26px;
  height: 26px;
  margin-right: 4px;
  border-radius: 50%;
  background: #070707;
  overflow: hidden;
`;
const AvatarBadge = styled.div`
  position: absolute;
  left: 30px;
  top: 2px;
  width: 20px;
  height: 16px;
  border-radius: 8px;
  background: #f7384a;
  color: #fff;
  font-size: 11.5px;
  line-height: 15px;
  text-align: center;
`;
const SymbolSearch = styled.div`
  display: flex;
  align-items: center;
  justify-content: space-between;
  flex-shrink: 0;
  width: 128px;
  height: 28px;
  padding: 0 2px 0 12px;
  border-radius: 14px;
  background: #ebebeb;
  font-size: 13.5px;
  font-weight: 700;
  letter-spacing: 0.1px;
`;
const Gem = styled.div`
  display: flex;
  align-items: center;
  justify-content: center;
  width: 24px;
  height: 24px;
  border-radius: 50%;
  background: #fff;
`;
const Timeframe = styled.div`
  display: flex;
  align-items: center;
  justify-content: center;
  flex-shrink: 0;
  width: ${(p) => p.$w}px;
  height: 34px;
  border-radius: 6px;
  background: ${(p) => (p.$active ? '#ebebeb' : 'transparent')};
  font-size: 14px;
  letter-spacing: -0.1px;
`;
const LayoutName = styled.div`
  flex-shrink: 0;
  width: 28px;
  padding-left: 1px;
  overflow: hidden;
  white-space: nowrap;
  font-size: 14px;
`;
const TradeButton = styled.button`
  flex-shrink: 0;
  width: 60px;
  height: 28px;
  margin-left: 4px;
  padding: 0;
  border: 1px solid #ebebeb;
  border-radius: 14px;
  background: #fff;
  color: #1f1f1f;
  font-family: inherit;
  font-size: 14px;
`;
const PublishButton = styled(TradeButton)`
  width: 69px;
  margin-left: 8px;
  border: 0;
  background: #2e2e2e;
  color: #fff;
`;
const Body = styled.div`
  display: flex;
  gap: 4px;
  height: 1038px;
`;
const LeftPanel = styled.div`
  display: flex;
  flex-direction: column;
  align-items: center;
  width: 52px;
  padding: 6px 0 22px;
  background: #fff;
  border-top-right-radius: 4px;
`;
const Tool = styled.div`
  display: flex;
  align-items: center;
  height: 38px;
`;
const ToolLine = styled.div`
  flex-shrink: 0;
  width: 36px;
  height: 1px;
  margin: 6px 0;
  background: #e3e3e3;
`;
const Spacer = styled.div`
  flex: 1;
`;
const Favorites = styled.div`
  display: flex;
  align-items: center;
  justify-content: center;
  width: 34px;
  height: 34px;
  border-radius: 6px;
  background: #2e2e2e;
  color: #fff;
`;
const ChartArea = styled.main`
  display: flex;
  flex-direction: column;
  width: 975px;
  background: #fff;
  border-radius: 4px 4px 0 0;
  overflow: hidden;
`;
const Pane = styled.section`
  position: relative;
  display: flex;
  flex-shrink: 0;
  height: ${(p) => p.$h}px;
  border-top: ${(p) => (p.$line ? '1px solid #e0e3eb' : '0')};
`;
const Axis = styled.div`
  position: relative;
  display: ${(p) => (p.$center ? 'flex' : 'block')};
  align-items: center;
  justify-content: center;
  width: 68px;
  border-left: 1px solid #dcdde0;
  overflow: hidden;
`;
const CurrencyBox = styled.div`
  position: absolute;
  left: 3px;
  top: 4px;
  display: flex;
  align-items: center;
  justify-content: space-between;
  width: 60px;
  height: 26px;
  padding: 0 4px 2px;
  border: 1px solid #e6e6e6;
  border-radius: 4px;
  background: #fff;
  box-shadow: 0 0 0 4px #fff;
  font-size: 12px;
`;
const AxisText = styled.text`
  font-family: ${FONT};
  font-size: ${(p) => p.$size || 12}px;
  font-weight: ${(p) => (p.$bold ? 700 : 400)};
  fill: ${(p) => p.$fill || '#24262e'};
`;
const WaveText = styled.text`
  font-family: 'Liberation Sans', sans-serif;
  font-size: 8px;
  font-weight: 700;
  fill: #222;
  stroke: none;
`;
const Legend = styled.div`
  position: absolute;
  left: 9px;
  top: 0;
`;
const TitleRow = styled.div`
  display: flex;
  align-items: center;
  height: 32px;
  font-size: 13px;
  letter-spacing: -0.1px;
  white-space: nowrap;
`;
const SymbolTitle = styled.div`
  width: 169px;
  text-align: right;
  font-size: 15px;
`;
const Status = styled.div`
  display: flex;
  align-items: center;
  justify-content: space-between;
  width: 39px;
  height: 18px;
  margin: 0 9px 0 8px;
  padding: 0 5px 0 7px;
  border-radius: 9px;
  background: linear-gradient(90deg, #d9efec 50%, #e2f1e3 50%);
`;
const Dot = styled.div`
  width: 8px;
  height: 8px;
  border-radius: 50%;
  background: #056656;
`;
const Ohlc = styled.div`
  width: 47px;
  b {
    color: #22ab94;
    font-weight: 400;
  }
  &:nth-child(3) {
    width: 48px;
  }
  &:nth-child(5) {
    width: 45px;
  }
`;
const Change = styled.div`
  margin-left: -1px;
  color: #22ab94;
  font-size: 12.6px;
`;
const TradeRow = styled.div`
  display: flex;
  align-items: center;
`;
const Quote = styled.div`
  display: flex;
  flex-direction: column;
  align-items: center;
  justify-content: center;
  width: 53px;
  height: 34px;
  border: 1px solid ${(p) => p.$color};
  border-radius: 5px;
  background: rgba(255, 255, 255, 0.8);
  color: ${(p) => p.$color};
  font-size: 11px;
  line-height: 14px;
  b {
    font-size: 12.4px;
  }
`;
const Spread = styled.div`
  width: 42px;
  padding-bottom: 2px;
  text-align: center;
  font-size: 10px;
`;
const LegendRow = styled.div`
  position: absolute;
  left: 9px;
  top: ${(p) => p.$top}px;
  display: flex;
  align-items: center;
`;
const Collapse = styled.div`
  display: flex;
  align-items: center;
  justify-content: center;
  gap: 4px;
  width: ${(p) => (p.$wide ? 39 : 29)}px;
  height: 21px;
  margin-right: 16px;
  border: 1px solid #dadada;
  border-radius: 3px;
  background: rgba(255, 255, 255, 0.7);
  font-size: 13px;
`;
const Sync = styled.div`
  display: flex;
  align-items: center;
  justify-content: center;
  width: 18px;
  height: 18px;
  border-radius: 50%;
  background: #e4dcf5;
`;
const FloatingTools = styled.div`
  position: absolute;
  left: 484px;
  top: 57px;
  display: flex;
  align-items: center;
  gap: 8px;
  width: 100px;
  height: 38px;
  padding-left: 8px;
  border-radius: 6px;
  background: #fff;
  box-shadow: 0 2px 4px rgba(0, 0, 0, 0.25);
`;
const Grip = styled.div`
  display: grid;
  grid-template-columns: 2px 2px;
  gap: 3px 4px;
  margin-right: 6px;
  i {
    width: 2px;
    height: 2px;
    background: #c6c6c6;
  }
`;
const RangeBar = styled.footer`
  display: flex;
  align-items: center;
  height: 39px;
  padding-left: 8px;
  border-top: 1px solid #e6e6e6;
  font-size: 14px;
`;
const Range = styled.div`
  width: ${(p) => p.$w}px;
  margin-left: -1px;
  margin-right: 1px;
  text-align: center;
  font-size: 13.6px;
  letter-spacing: -0.1px;
`;
const Clock = styled.div`
  margin-left: auto;
  white-space: nowrap;
`;
const Adjust = styled.div`
  width: 36px;
`;
const RightPanel = styled.div`
  display: flex;
  flex-direction: column;
  width: 45px;
  padding: 2px 0 0;
  background: #fff;
  border-top-left-radius: 4px;
`;
const SideItem = styled.div`
  position: relative;
  display: flex;
  align-items: center;
  justify-content: center;
  flex-shrink: 0;
  height: ${(p) => p.$h}px;
`;
const Badge = styled.div`
  position: absolute;
  right: ${(p) => p.$right}px;
  top: ${(p) => p.$top}px;
  min-width: 16px;
  height: 16px;
  padding: 0 4px;
  border-radius: 8px;
  background: #f23645;
  color: #fff;
  font-size: 12px;
  line-height: 15px;
  text-align: center;
`;
const AppsButton = styled.div`
  display: flex;
  align-items: center;
  justify-content: center;
  width: 34px;
  height: 34px;
  border-radius: 50%;
  background: #2e2e2e;
`;
const SideLine = styled.div`
  flex-shrink: 0;
  width: 33px;
  height: 1px;
  margin: 3px 0 4px 6px;
  background: #e0e0e0;
`;
const Tooltip = styled.div`
  position: absolute;
  left: 10px;
  top: 42px;
  display: flex;
  flex-direction: column;
  width: 211px;
  height: 42px;
  padding: 4px 8px 2px;
  border-radius: 2px;
  background: rgba(56, 56, 56, 0.94);
  color: #e8e8e8;
  font-size: 13px;
  line-height: 18px;
  white-space: nowrap;
  &::before {
    content: '';
    position: absolute;
    left: 12px;
    top: -4px;
    border: 5px solid transparent;
    border-top: 0;
    border-bottom: 4px solid #444;
  }
`;
